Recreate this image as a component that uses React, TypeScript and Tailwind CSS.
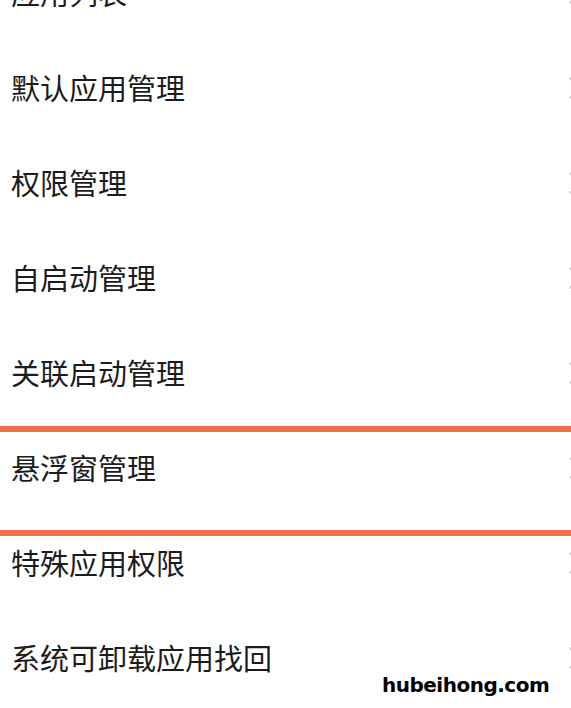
import React from 'react';

const items = [
  '应用列表',
  '默认应用管理',
  '权限管理',
  '自启动管理',
  '关联启动管理',
  '悬浮窗管理',
  '特殊应用权限',
  '系统可卸载应用找回',
];

const Chevron = () => (
  <svg width="12" height="22" viewBox="0 0 12 22" className="shrink-0 -mr-[10px]">
    <path d="M1.5 1.5 L10 11 L1.5 20.5" fill="none" stroke="#c4c4c4" strokeWidth="2" strokeLinecap="round" strokeLinejoin="round" />
  </svg>
);

export default function App() {
  return (
    <div className="relative w-[571px] h-[708px] overflow-hidden bg-white" style={{ fontFamily: '"Noto Sans CJK SC", "Noto Sans", sans-serif' }}>
      <div className="flex flex-col -mt-[55px]">
        {items.map((label) => (
          <div key={label} className="h-[95px] flex items-center justify-between pl-[11px]">
            <span className="text-[29px] leading-none text-[#1c1c1c]">{label}</span>
            <Chevron />
          </div>
        ))}
      </div>

      {/* highlight lines around 悬浮窗管理 */}
      <div className="absolute left-0 right-0 top-[426px] h-[6px] bg-[#f0704a]" />
      <div className="absolute left-0 right-0 top-[530px] h-[6px] bg-[#f0704a]" />

      {/* watermark */}
      <div
        className="absolute left-[382px] top-[675px] text-[20px] font-bold text-black leading-none tracking-[-0.5px]"
        style={{ fontFamily: '"DejaVu Sans", sans-serif' }}
      >
        hubeihong.com
      </div>
    </div>
  );
}
